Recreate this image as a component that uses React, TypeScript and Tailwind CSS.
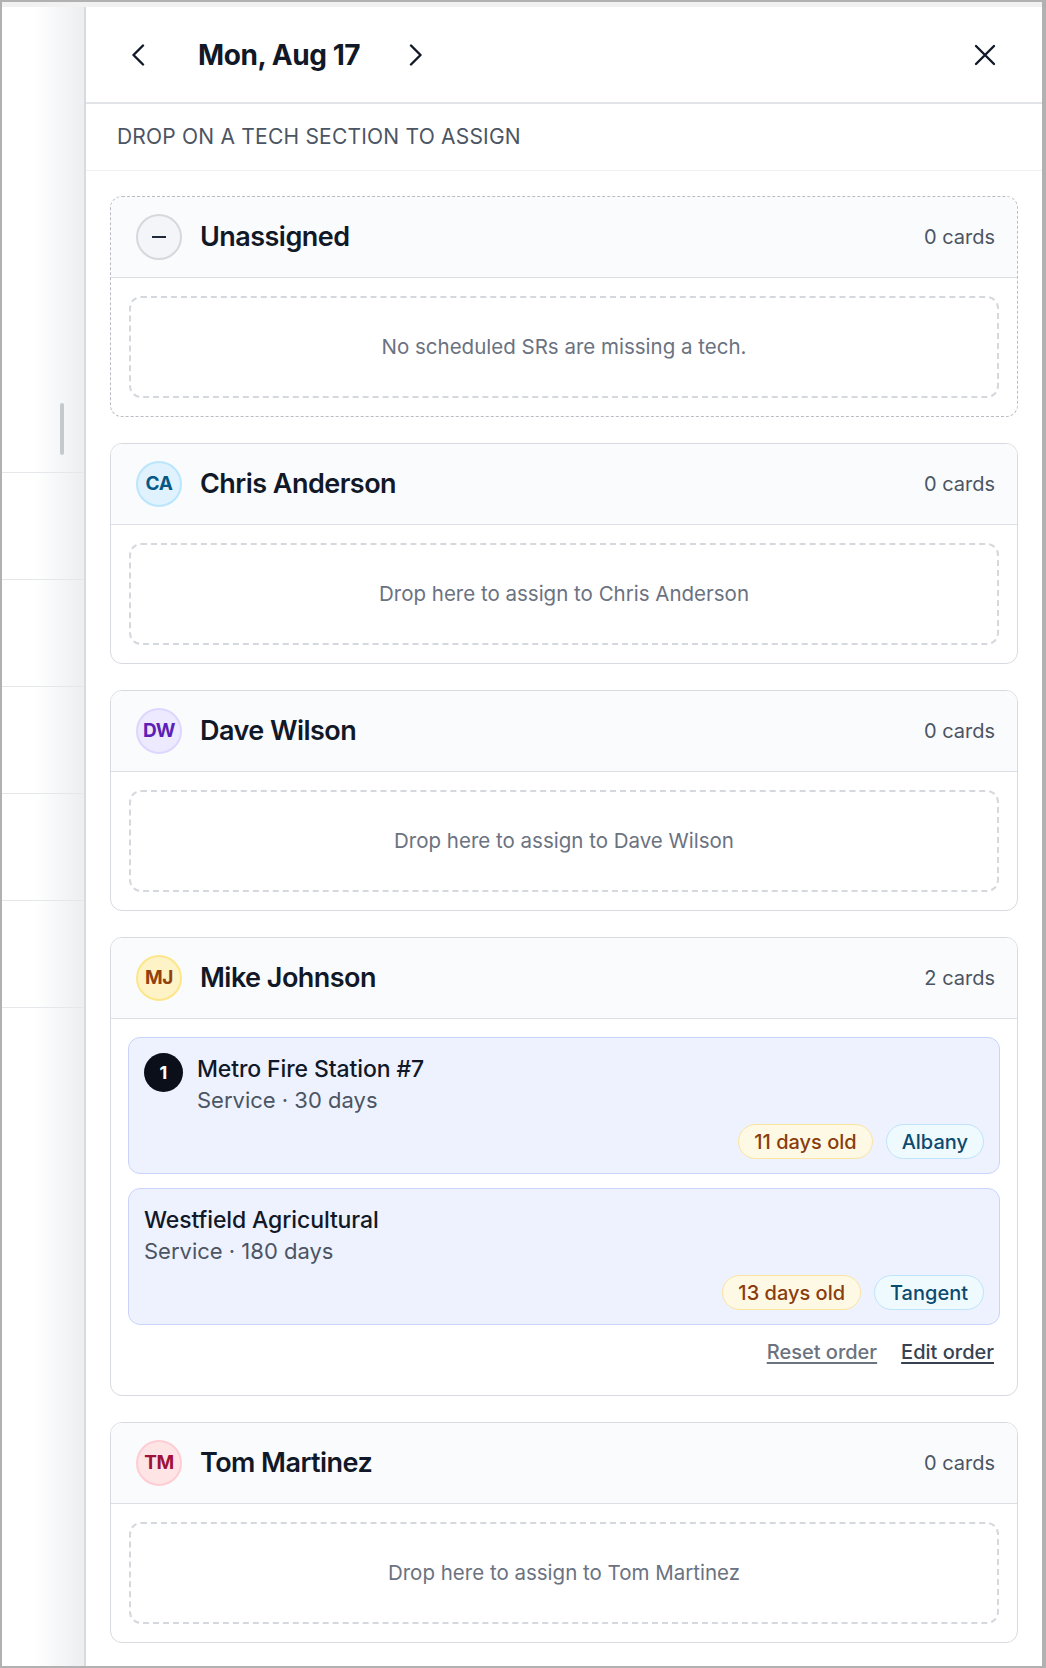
import { type ReactNode } from 'react';

type Tone = 'sky' | 'violet' | 'amber' | 'rose';

const AVATAR_TONES: Record<Tone, string> = {
  sky: 'bg-[#e0f2fe] border-[#bae6fd] text-[#075985]',
  violet: 'bg-[#ede9fe] border-[#ddd6fe] text-[#5b21b6]',
  amber: 'bg-[#fef3c7] border-[#fde68a] text-[#92400e]',
  rose: 'bg-[#ffe4e6] border-[#fecdd3] text-[#9f1239]',
};

type Job = {
  order?: number;
  title: string;
  subtitle: string;
  age: string;
  city: string;
};

const MIKE_JOBS: Job[] = [
  { order: 1, title: 'Metro Fire Station #7', subtitle: 'Service · 30 days', age: '11 days old', city: 'Albany' },
  { title: 'Westfield Agricultural', subtitle: 'Service · 180 days', age: '13 days old', city: 'Tangent' },
];

function Chevron({ dir }: { dir: 'left' | 'right' }) {
  return (
    <svg width="22" height="22" viewBox="0 0 22 22" fill="none" aria-hidden>
      <polyline
        points={dir === 'left' ? '15,1.5 5.5,11 15,20.5' : '7,1.5 16.5,11 7,20.5'}
        stroke="#111827"
        strokeWidth="2.4"
        strokeLinecap="round"
        strokeLinejoin="round"
      />
    </svg>
  );
}

function CloseIcon() {
  return (
    <svg width="22" height="22" viewBox="0 0 22 22" fill="none" aria-hidden>
      <path d="M2 2 L20 20 M20 2 L2 20" stroke="#111827" strokeWidth="2.4" strokeLinecap="round" />
    </svg>
  );
}

function Avatar({ initials, tone }: { initials: string; tone: Tone }) {
  return (
    <div
      className={`flex size-[46px] shrink-0 items-center justify-center rounded-full border-2 text-[19px] font-bold tracking-tight ${AVATAR_TONES[tone]}`}
    >
      {initials}
    </div>
  );
}

function SectionCard({
  avatar,
  name,
  count,
  dashed,
  children,
}: {
  avatar: ReactNode;
  name: string;
  count: string;
  dashed?: boolean;
  children: ReactNode;
}) {
  return (
    <section
      className={`overflow-hidden rounded-[12px] bg-white ${
        dashed ? 'border border-dashed border-[#b9bcc2]' : 'border-[1.5px] border-[#d7dadf]'
      }`}
    >
      <header className="flex h-[81px] items-center gap-[18px] border-b-[1.5px] border-[#dcdfe3] bg-[#fafbfc] pl-[25px] pr-[22px]">
        {avatar}
        <h2 className="text-[27px] font-semibold tracking-[-0.02em] text-[#111827]">{name}</h2>
        <span className="ml-auto text-[20px] text-[#4b5563]">{count}</span>
      </header>
      {children}
    </section>
  );
}

function DropZone({ text }: { text: string }) {
  return (
    <div className="p-[18px]">
      <div className="flex h-[102px] items-center justify-center rounded-[12px] border-2 border-dashed border-[#d5d8dd] text-[20.5px] text-[#6b7280]">
        {text}
      </div>
    </div>
  );
}

function JobCard({ job }: { job: Job }) {
  return (
    <div className="rounded-[12px] border-[1.5px] border-[#c9d3fb] bg-[#eef2ff] px-[15px] pb-[14px] pt-[15px]">
      <div className="flex gap-[14px]">
        {job.order ? (
          <div className="flex size-[39px] shrink-0 items-center justify-center rounded-full bg-[#0b0f19] text-[18px] font-bold text-white">
            {job.order}
          </div>
        ) : null}
        <div className="flex flex-col">
          <span className="text-[23px] font-medium leading-[32px] tracking-[-0.005em] text-[#111827]">{job.title}</span>
          <span className="text-[22px] leading-[31px] text-[#4b5563]">{job.subtitle}</span>
        </div>
      </div>
      <div className="mt-[8px] flex justify-end gap-[13px]">
        <span className="flex h-[35px] items-center rounded-full border-[1.5px] border-[#fbe3a0] bg-[#fef9e5] px-[15px] text-[20px] font-medium text-[#8a3d0c]">
          {job.age}
        </span>
        <span className="flex h-[35px] items-center rounded-full border-[1.5px] border-[#bfe3fb] bg-[#effaff] px-[15px] text-[20px] font-medium text-[#0c4a6e]">
          {job.city}
        </span>
      </div>
    </div>
  );
}

export default function App() {
  return (
    <div
      className="flex h-[1668px] w-full flex-col overflow-hidden border-y-2 border-l-2 border-r-4 border-[#b1b1b1] bg-white"
      style={{ fontFamily: 'Inter, "Noto Sans", sans-serif' }}
    >
      <div className="h-[5px] shrink-0 bg-[#f1f1f1]" />
      <div className="flex flex-1">
        {/* page behind the drawer */}
        <aside className="flex w-[82px] shrink-0 flex-col bg-linear-to-r from-white from-40% to-[#eceef1]">
          <div className="h-[466px] border-b-[1.5px] border-[#e5e7eb] pl-[58px] pt-[396px]">
            <div className="h-[52px] w-[4px] rounded-full bg-[#c5c8cd]" />
          </div>
          {[0, 1, 2, 3, 4].map((row) => (
            <div key={row} className="h-[107px] border-b-[1.5px] border-[#e5e7eb]" />
          ))}
        </aside>

        <main className="flex flex-1 flex-col border-l-2 border-[#d8dade]">
          <div className="flex h-[97px] shrink-0 items-center border-b-2 border-[#e1e3e6] pl-[33px] pr-[37px]">
            <button type="button" className="flex size-[40px] items-center justify-center">
              <Chevron dir="left" />
            </button>
            <h1 className="ml-[39px] text-[28px] font-bold tracking-[-0.015em] text-[#111827]">Mon, Aug 17</h1>
            <button type="button" className="ml-[35px] flex size-[40px] items-center justify-center">
              <Chevron dir="right" />
            </button>
            <button type="button" className="ml-auto flex size-[40px] items-center justify-center">
              <CloseIcon />
            </button>
          </div>

          <div className="flex h-[67px] shrink-0 items-center border-b border-[#f0f1f3] pl-[31px] text-[21px] uppercase tracking-[0.01em] text-[#4b5563]">
            Drop on a tech section to assign
          </div>

          <div className="flex flex-col gap-[26px] pl-[24px] pr-[24px] pt-[25px]">
            <SectionCard
              dashed
              name="Unassigned"
              count="0 cards"
              avatar={
                <div className="flex size-[46px] shrink-0 items-center justify-center rounded-full border-2 border-[#d5d8dd] bg-[#f3f5f8]">
                  <div className="h-[2px] w-[14px] bg-[#1f2937]" />
                </div>
              }
            >
              <DropZone text="No scheduled SRs are missing a tech." />
            </SectionCard>

            <SectionCard name="Chris Anderson" count="0 cards" avatar={<Avatar initials="CA" tone="sky" />}>
              <DropZone text="Drop here to assign to Chris Anderson" />
            </SectionCard>

            <SectionCard name="Dave Wilson" count="0 cards" avatar={<Avatar initials="DW" tone="violet" />}>
              <DropZone text="Drop here to assign to Dave Wilson" />
            </SectionCard>

            <SectionCard name="Mike Johnson" count="2 cards" avatar={<Avatar initials="MJ" tone="amber" />}>
              <div className="px-[17px] pb-[30px] pt-[18px]">
                <div className="flex flex-col gap-[14px]">
                  {MIKE_JOBS.map((job) => (
                    <JobCard key={job.title} job={job} />
                  ))}
                </div>
                <div className="mt-[14px] flex h-[26px] items-center justify-end gap-[24px] pr-[6px] text-[20px] font-medium">
                  <button type="button" className="text-[#6b7280] underline underline-offset-[3px]">
                    Reset order
                  </button>
                  <button type="button" className="text-[#374151] underline underline-offset-[3px]">
                    Edit order
                  </button>
                </div>
              </div>
            </SectionCard>

            <SectionCard name="Tom Martinez" count="0 cards" avatar={<Avatar initials="TM" tone="rose" />}>
              <DropZone text="Drop here to assign to Tom Martinez" />
            </SectionCard>
          </div>
        </main>
      </div>
    </div>
  );
}
